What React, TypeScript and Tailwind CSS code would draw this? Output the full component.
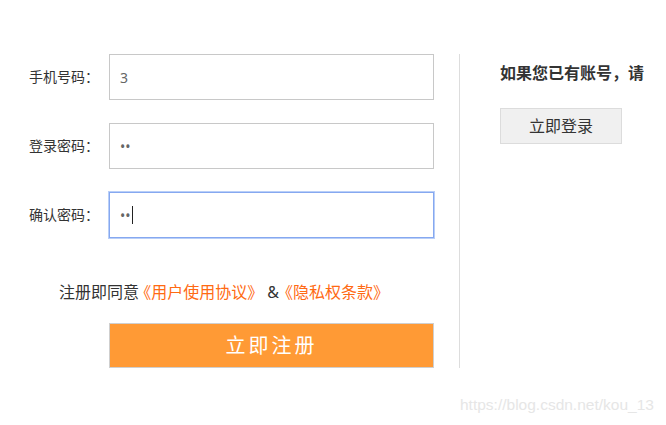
export default function App() {
    return (
        <div className="relative w-[666px] h-[425px] bg-white font-['Noto_Sans','Noto_Sans_CJK_SC',sans-serif] text-[#333]">
            <div className="flex pt-[54px]">
                {/* Register form */}
                <div className="w-[459px]">
                    <div className="flex items-center">
                        <label className="w-[109px] pr-[10px] text-right text-[14px] leading-[20px]">手机号码：</label>
                        <div className="w-[325px] h-[46px] border border-[#c8c8c8] flex items-center pl-[10px] text-[14px] text-[#666]">
                            3
                        </div>
                    </div>

                    <div className="flex items-center mt-[23px]">
                        <label className="w-[109px] pr-[10px] text-right text-[14px] leading-[20px]">登录密码：</label>
                        <div className="w-[325px] h-[46px] border border-[#c8c8c8] flex items-center pl-[10px] text-[14px] text-[#666]">
                            ••
                        </div>
                    </div>

                    <div className="flex items-center mt-[23px]">
                        <label className="w-[109px] pr-[10px] text-right text-[14px] leading-[20px]">确认密码：</label>
                        <div className="w-[325px] h-[46px] border border-[#86a8f0] outline outline-1 outline-[#b9cff8] flex items-center pl-[10px] text-[14px] text-[#666]">
                            ••
                            <span className="ml-[1px] w-px h-[18px] bg-[#222]"></span>
                        </div>
                    </div>

                    <p className="mt-[42px] pl-[59px] text-[16px] leading-[24px] whitespace-pre">
                        注册即同意 <a className="text-[#ff6a13]"><span className="[font-feature-settings:'halt']">《</span>用户使用协议》</a><span className="ml-[4px] mr-[6px]">&</span><a className="text-[#ff6a13]"><span className="[font-feature-settings:'halt']">《</span>隐私权条款》</a>
                    </p>

                    <button className="mt-[19px] ml-[109px] w-[325px] h-[45px] border border-[#cfcfcf] bg-[#ff9a35] text-white text-[20px] tracking-[3px]">
                        立即注册
                    </button>
                </div>

                {/* Login side */}
                <div className="border-l border-[#dddddd] pl-[40px]">
                    <h3 className="mt-[7px] text-[16px] leading-[24px] font-bold">如果您已有账号，请</h3>
                    <button className="mt-[23px] w-[122px] h-[36px] border border-[#dcdcdc] bg-[#f0f0f0] text-[16px] text-[#333]">
                        立即登录
                    </button>
                </div>
            </div>

            <div className="absolute left-[460px] top-[396px] font-['Liberation_Sans',sans-serif] text-[15.5px] leading-[18px] text-[#e6e6e6]">
                https://blog.csdn.net/kou_13
            </div>
        </div>
    )
}
